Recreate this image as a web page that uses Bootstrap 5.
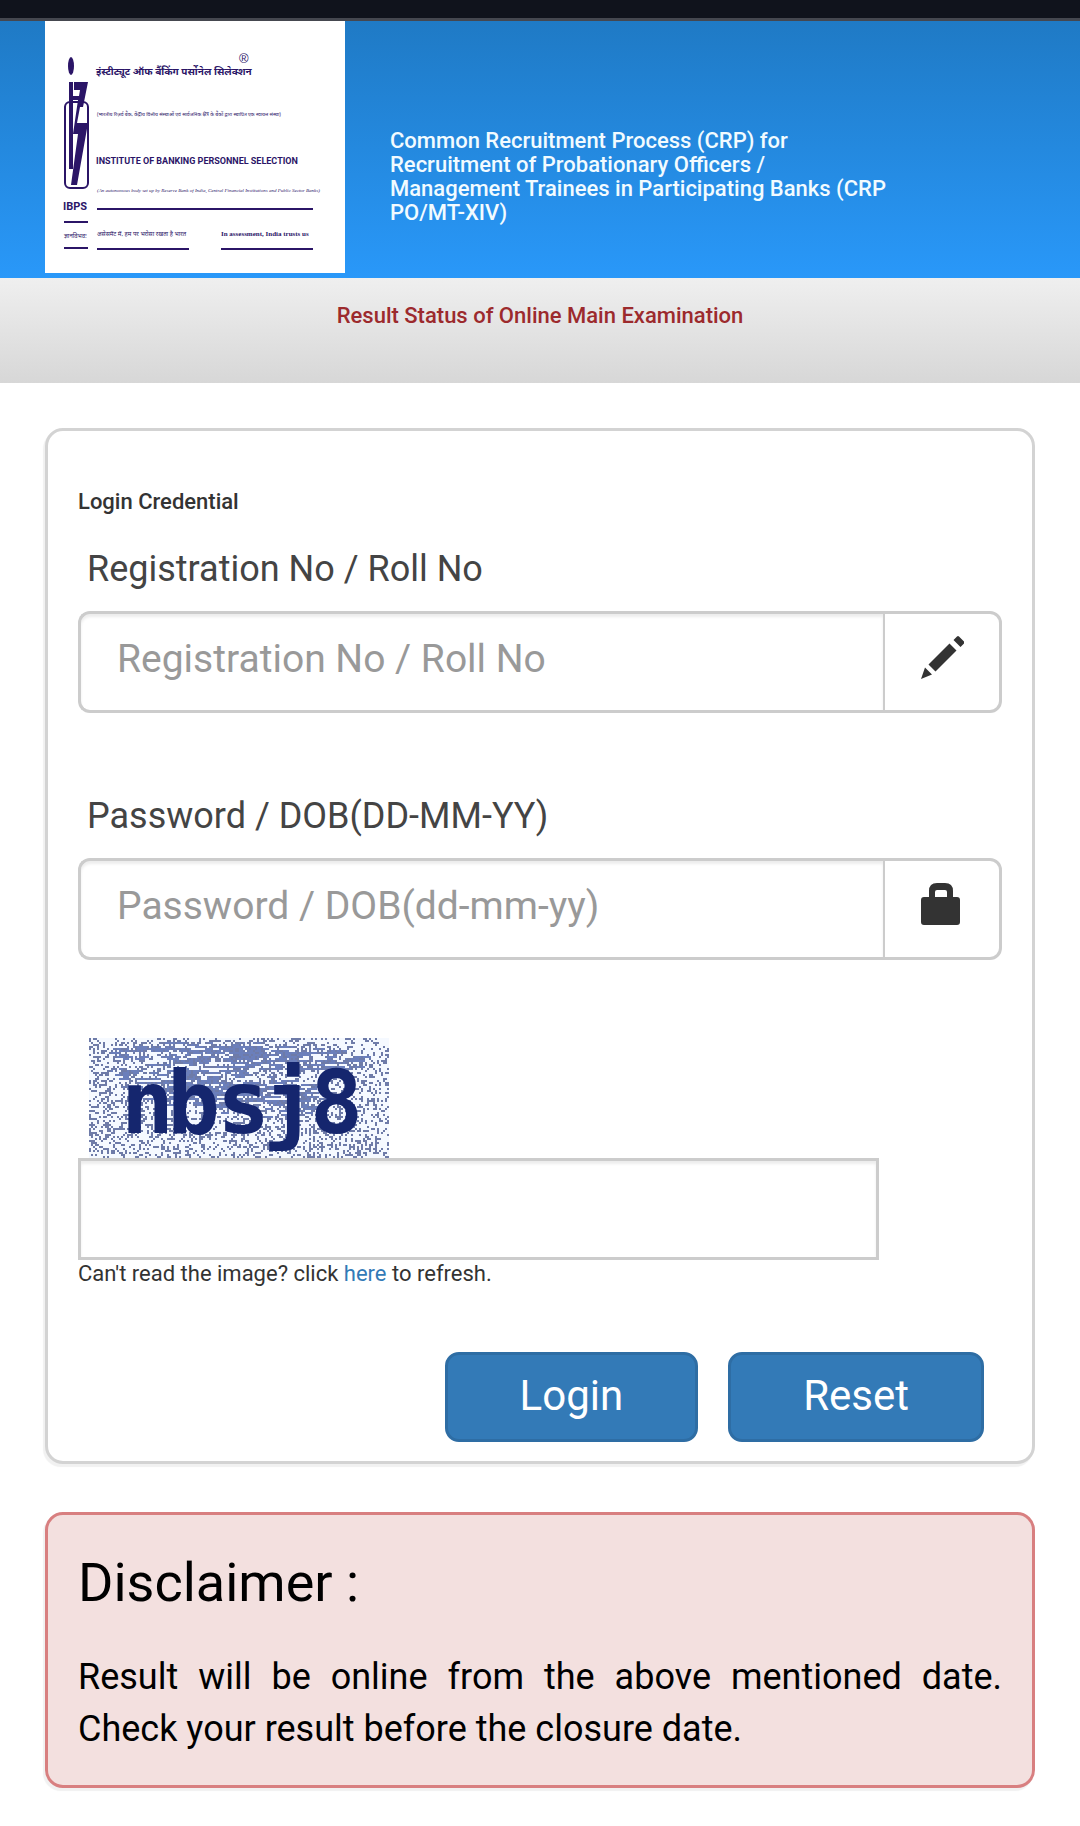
<!DOCTYPE html>
<html lang="en">
<head>
<meta charset="utf-8">
<meta name="viewport" content="width=device-width, initial-scale=1">
<title>IBPS - Result Status of Online Main Examination</title>
<link href="https://cdn.jsdelivr.net/npm/bootstrap@5.3.0/dist/css/bootstrap.min.css" rel="stylesheet">
<style>
  body { font-family: Roboto, "Noto Sans", sans-serif; font-size: 22px; line-height: 30px; color: #333; background: #fff; }
  .top-strip { height: 21px; background: #10131c; border-bottom: 3px solid #45474f; }
  .site-header { background: linear-gradient(#1f7ac5, #2998f9); padding: 0 45px 5px; }
  .brand-logo { display: block; background: #fff; flex: none; }
  .site-title { font-size: 22px; line-height: 24px; font-weight: 500; color: #f2fbff; max-width: 505px; margin: 60px 0 0 45px; }
  .status-strip { background: linear-gradient(#efefef, #d7d7d7); height: 105px; padding-top: 23px; }
  .status-strip h2 { font-size: 22px; line-height: 30px; font-weight: 500; color: #9c2a2d; }
  .page-body { padding: 45px 45px 38px; }
  .panel-box { border: 3px solid #d3d3d3; border-radius: 18px; box-shadow: -2px 3px 1px #f1f1f1; background: #fff; }
  .login-panel { padding: 56px 30px 19px; margin-bottom: 48px; }
  .login-panel h3 { font-size: 22px; line-height: 30px; font-weight: 500; margin-bottom: 27px; }
  .field { margin-bottom: 78px; }
  .field label { display: block; font-size: 36px; line-height: 50px; color: #444; padding-left: 9px; margin-bottom: 17px; }
  .login-panel .form-control { height: 102px; border: 3px solid #ccc; border-radius: 12px; font-size: 39px; padding: 0 36px 7px; box-shadow: inset 0 3px 3px rgba(0,0,0,.075); color: #555; }
  .login-panel .input-group .form-control { border-right: 0; }
  .login-panel .form-control::placeholder { color: #999; }
  .login-panel .input-group-text { width: 120px; justify-content: center; background: #fff; border: 3px solid #ccc; border-radius: 12px; padding: 0 0 10px; }
  .login-panel .captcha-input { border-radius: 0; width: 87%; max-width: 801px; }
  .captcha-pic { display: block; margin-left: 11px; }
  .help-line { line-height: 28px; }
  .help-line a { color: #337ab7; text-decoration: none; }
  .actions { gap: 30px; margin-top: 64px; padding-right: 18px; }
  .actions .btn { --bs-btn-bg: #337ab7; --bs-btn-border-color: #2e6da4; height: 90px; min-width: 253px; border-width: 3px; border-radius: 14px; font-size: 42px; line-height: 51px; padding: 0 72px 3px; }
  .disclaimer { background: #f3e0df; border-color: #d87f80; padding: 38px 30px 30px; color: #000; }
  .disclaimer h2 { font-size: 54px; line-height: 60px; font-weight: 400; margin-bottom: 38px; }
  .disclaimer p { font-size: 36px; line-height: 52px; text-align: justify; }
</style>
</head>
<body>
<div class="top-strip"></div>
<header class="site-header d-flex align-items-center">
  <svg class="brand-logo" width="300" height="252" viewBox="0 0 300 252" role="img" aria-label="Institute of Banking Personnel Selection">
    <g fill="#2b1567">
      <ellipse cx="26" cy="45" rx="3" ry="9"/>
      <path d="M24 61h4v87h-4zM29 61h14l-5 25h-3l-3 16h11l-11 62h-6l7-51h-5l5-34h-5v-4h6l1-6h-6z"/>
      <rect x="20" y="81" width="23" height="86" rx="5" fill="none" stroke="#2b1567" stroke-width="2"/>
      <path d="M19 200h24v2H19zM19 226h24v2H19zM52 187h216v2H52zM52 227h92v2H52zM176 227h92v2H176z"/>
      <text x="18" y="189" font-family="Roboto" font-size="11" font-weight="700">IBPS</text>
      <text x="19" y="217" font-family="Noto Sans, sans-serif" font-size="6">ज्ञानविभवः</text>
      <text x="51" y="54" font-family="Noto Sans, sans-serif" font-size="10" font-weight="700">इंस्टीट्यूट ऑफ बैंकिंग पर्सोनेल सिलेक्शन</text>
      <text x="194" y="42" font-family="Liberation Sans, sans-serif" font-size="13">®</text>
      <text x="52" y="95" font-family="Noto Sans, sans-serif" font-size="5">(भारतीय रिज़र्व बैंक, केंद्रीय वित्तीय संस्थाओं एवं सार्वजनिक क्षेत्र के बैंकों द्वारा स्थापित एक स्वायत्त संस्था)</text>
      <text x="51" y="143" font-family="Roboto" font-size="9" font-weight="700">INSTITUTE OF BANKING PERSONNEL SELECTION</text>
      <text x="52" y="171" font-family="Liberation Serif" font-style="italic" font-size="5">(An autonomous body set up by Reserve Bank of India, Central Financial Institutions and Public Sector Banks)</text>
      <text x="52" y="215" font-family="Noto Sans, sans-serif" font-size="6">असेसमेंट में, हम पर भरोसा रखता है भारत</text>
      <text x="176" y="215" font-family="Liberation Serif" font-weight="700" font-size="7">In assessment, India trusts us</text>
    </g>
  </svg>
  <h1 class="site-title">Common Recruitment Process (CRP) for Recruitment of Probationary Officers / Management Trainees in Participating Banks (CRP PO/MT-XIV)</h1>
</header>
<section class="status-strip text-center">
  <h2 class="m-0">Result Status of Online Main Examination</h2>
</section>
<main class="page-body">
  <form class="panel-box login-panel">
    <h3>Login Credential</h3>
    <div class="field">
      <label for="regno">Registration No / Roll No</label>
      <div class="input-group">
        <input type="text" class="form-control" id="regno" placeholder="Registration No / Roll No">
        <span class="input-group-text">
          <svg width="43" height="43" viewBox="0 0 43 43" fill="#333" aria-hidden="true"><path d="M36 0.500q1-1 2 0l5 5q1 1 0 2l-3.500 3.500-7-7zM28.500 7.500l7 7-21 21-7-7zM4 31.500l7 7-11 4.500z"/></svg>
        </span>
      </div>
    </div>
    <div class="field">
      <label for="dob">Password / DOB(DD-MM-YY)</label>
      <div class="input-group">
        <input type="password" class="form-control" id="dob" placeholder="Password / DOB(dd-mm-yy)">
        <span class="input-group-text">
          <svg width="42" height="42" viewBox="0 0 42 42" fill="#333" aria-hidden="true"><path fill-rule="evenodd" d="M8 14V8q0-8 8-8h8q8 0 8 8v6h4q3 0 3 3v22q0 3-3 3H3q-3 0-3-3V17q0-3 3-3zM14 14h12V9q0-2-2-2h-8q-2 0-2 2z"/></svg>
        </span>
      </div>
    </div>
    <svg class="captcha-pic" width="300" height="120" viewBox="0 0 300 120" role="img" aria-label="Verification code">
      <rect width="300" height="120" fill="#f5f9ff"/>
      <path id="haze" fill="#6b7fbb"/>
      <path id="specks" fill="#6e7ba8"/>
      <text x="32 78 128 174 221" y="95" font-family="DejaVu Sans Mono" font-size="88" font-weight="700" fill="#15266e">nbsj8</text>
    </svg>
    <input type="text" class="form-control captcha-input" id="code" aria-label="Verification code">
    <div class="help-line">Can't read the image? click <a href="#">here</a> to refresh.</div>
    <div class="actions d-flex justify-content-end">
      <button type="submit" class="btn btn-primary">Login</button>
      <button type="reset" class="btn btn-primary">Reset</button>
    </div>
  </form>
  <section class="panel-box disclaimer">
    <h2>Disclaimer :</h2>
    <p class="m-0">Result will be online from the above mentioned date. Check your result before the closure date.</p>
  </section>
</main>
<script src="https://cdn.jsdelivr.net/npm/bootstrap@5.3.0/dist/js/bootstrap.bundle.min.js"></script>
<script>
  // Verification picture: speckle all over, horizontal dashes where the two haze bands lie
  let seed = 7;
  const rnd = () => (seed = (seed * 16807) % 2147483647) / 2147483647;
  let specks = '', haze = '';
  for (let y = 0; y < 120; y += 2) {
    for (let x = 0; x < 300; x += 2) {
      const d = Math.min(
        Math.hypot((x - 150) / 130, (y - 18 - (x - 150) * 0.04) / 15),
        Math.hypot((x - 130) / 120, (y - 52 - (x - 130) * 0.12) / 24));
      if (d < 1 && rnd() < 0.20 * (1.2 - d)) haze += `M${x} ${y}h${6 + 2 * Math.floor(rnd() * 7)}v2H${x}z`;
      if (rnd() < 0.30) specks += `M${x} ${y}h2v2h-2z`;
    }
  }
  document.getElementById('specks').setAttribute('d', specks);
  document.getElementById('haze').setAttribute('d', haze);
</script>
</body>
</html>
